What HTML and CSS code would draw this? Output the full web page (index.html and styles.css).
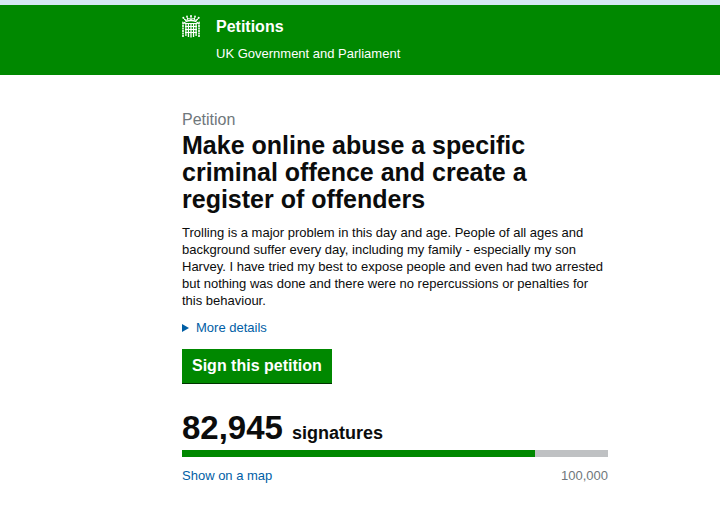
FILE: index.html
```html
<!DOCTYPE html>
<html lang="en">
<head>
    <meta charset="UTF-8">
    <meta name="viewport" content="width=device-width, initial-scale=1.0">
    <title>Make online abuse a specific criminal offence - Petitions</title>
    <link rel="stylesheet" href="styles.css">
</head>
<body>

    <header class="header">
        <svg class="portcullis" viewBox="0 0 18 23" aria-hidden="true">
            <g fill="none" stroke="currentColor">
                <!-- crown -->
                <path d="M4 6L1.500 3M14 6l2.500-3M9 5V1M6 5L5 2M12 5l1-3" />
                <path d="M2 4.500l2.500 .5 2-1.500 2.500 .8 2.500-.8 2 1.500 2.500-.5" />
                <path d="M3.500 6.500Q9 4.500 14.500 6.500" stroke-width="1.500" />
                <!-- gate -->
                <path d="M3 8.500h12M3 11.500h12M3 14.500h12M3 17.500h12" stroke-width="1.200" />
                <path d="M3.900 8v13M6.450 8v14M9 8v14.500M11.550 8v14M14.100 8v13" stroke-width="1.300" />
                <!-- chains -->
                <path d="M3.500 8L1 7.500v15M14.500 8l2.500-.5v15" stroke-width="1.600" stroke-dasharray="2 .5" />
            </g>
            <g fill="currentColor">
                <circle cx="1.300" cy="2.800" r="1" />
                <circle cx="5" cy="1.500" r=".9" />
                <circle cx="9" cy="1" r="1" />
                <circle cx="13" cy="1.500" r=".9" />
                <circle cx="16.700" cy="2.800" r="1" />
            </g>
        </svg>
        <div>
            <a class="site-name" href="#">Petitions</a>
            <p class="tagline">UK Government and Parliament</p>
        </div>
    </header>

    <main class="petition">
        <h1 class="title">
            <span class="label">Petition</span>
            Make online abuse a specific criminal offence and create a register of offenders
        </h1>
        <p class="intro">Trolling is a major problem in this day and age. People of all ages and background suffer every day, including my family - especially my son Harvey. I have tried my best to expose people and even had two arrested but nothing was done and there were no repercussions or penalties for this behaviour.</p>

        <details class="more">
            <summary>
                <svg class="arrow" viewBox="0 0 7 8" aria-hidden="true"><path d="M0 0l7 4-7 4z" fill="currentColor" /></svg>
                More details
            </summary>
        </details>

        <button class="sign-button" type="button">Sign this petition</button>

        <p class="count"><span class="number">82,945</span> signatures</p>
        <div class="bar">
            <div class="bar-done" style="width: 82.945%"></div>
        </div>
        <div class="bar-footer">
            <a href="#">Show on a map</a>
            <span class="goal">100,000</span>
        </div>
    </main>

</body>
</html>
```

FILE: styles.css
```css
body {
    font-family: "Liberation Sans", Arial, sans-serif;
    font-size: 13px;
    line-height: 17px;
    color: #0b0c0c;
    background-color: white;
    margin: 0;
}
a {
    color: #005ea5;
    text-decoration: none;
}
p {
    margin: 0;
}
.header {
    display: flex;
    gap: 16px;
    padding: 10px 112px 13px 182px;
    border-top: 5px solid #d5e8f3;
    background-color: #008800;
    color: white;
}
.portcullis {
    width: 18px;
    height: 23px;
}
.site-name {
    display: block;
    margin-top: 2px;
    font-size: 16px;
    line-height: 20px;
    font-weight: bold;
    color: white;
}
.tagline {
    margin-top: 8px;
}
.petition {
    padding: 34px 112px 24px 182px;
}
.title {
    margin: 0;
    font-size: 25px;
    line-height: 27px;
    font-weight: bold;
}
.label {
    display: block;
    margin-bottom: 2px;
    font-size: 16px;
    line-height: 21px;
    font-weight: normal;
    color: #6f777b;
}
.intro {
    margin-top: 11px;
}
.more {
    margin-top: 10px;
    color: #005ea5;
}
.more summary {
    display: flex;
    align-items: center;
    gap: 7px;
    cursor: pointer;
}
.arrow {
    width: 7px;
    height: 8px;
}
.sign-button {
    display: block;
    margin-top: 13px;
    padding: 7px 10px;
    border: none;
    box-shadow: 0 1px 0 #003300;
    background-color: #008800;
    color: white;
    font-family: inherit;
    font-size: 16px;
    line-height: 20px;
    font-weight: bold;
    cursor: pointer;
}
.sign-button:hover {
    background-color: #006f00;
}
.count {
    margin-top: 29px;
    font-size: 18px;
    line-height: 32px;
    font-weight: bold;
}
.number {
    margin-right: 4px;
    font-size: 33px;
}
.bar {
    height: 7px;
    margin-top: 1px;
    background-color: #bfc1c3;
}
.bar-done {
    height: 100%;
    background-color: #008800;
}
.bar-footer {
    display: flex;
    justify-content: space-between;
    margin-top: 10px;
}
.goal {
    color: #6f777b;
}
```
